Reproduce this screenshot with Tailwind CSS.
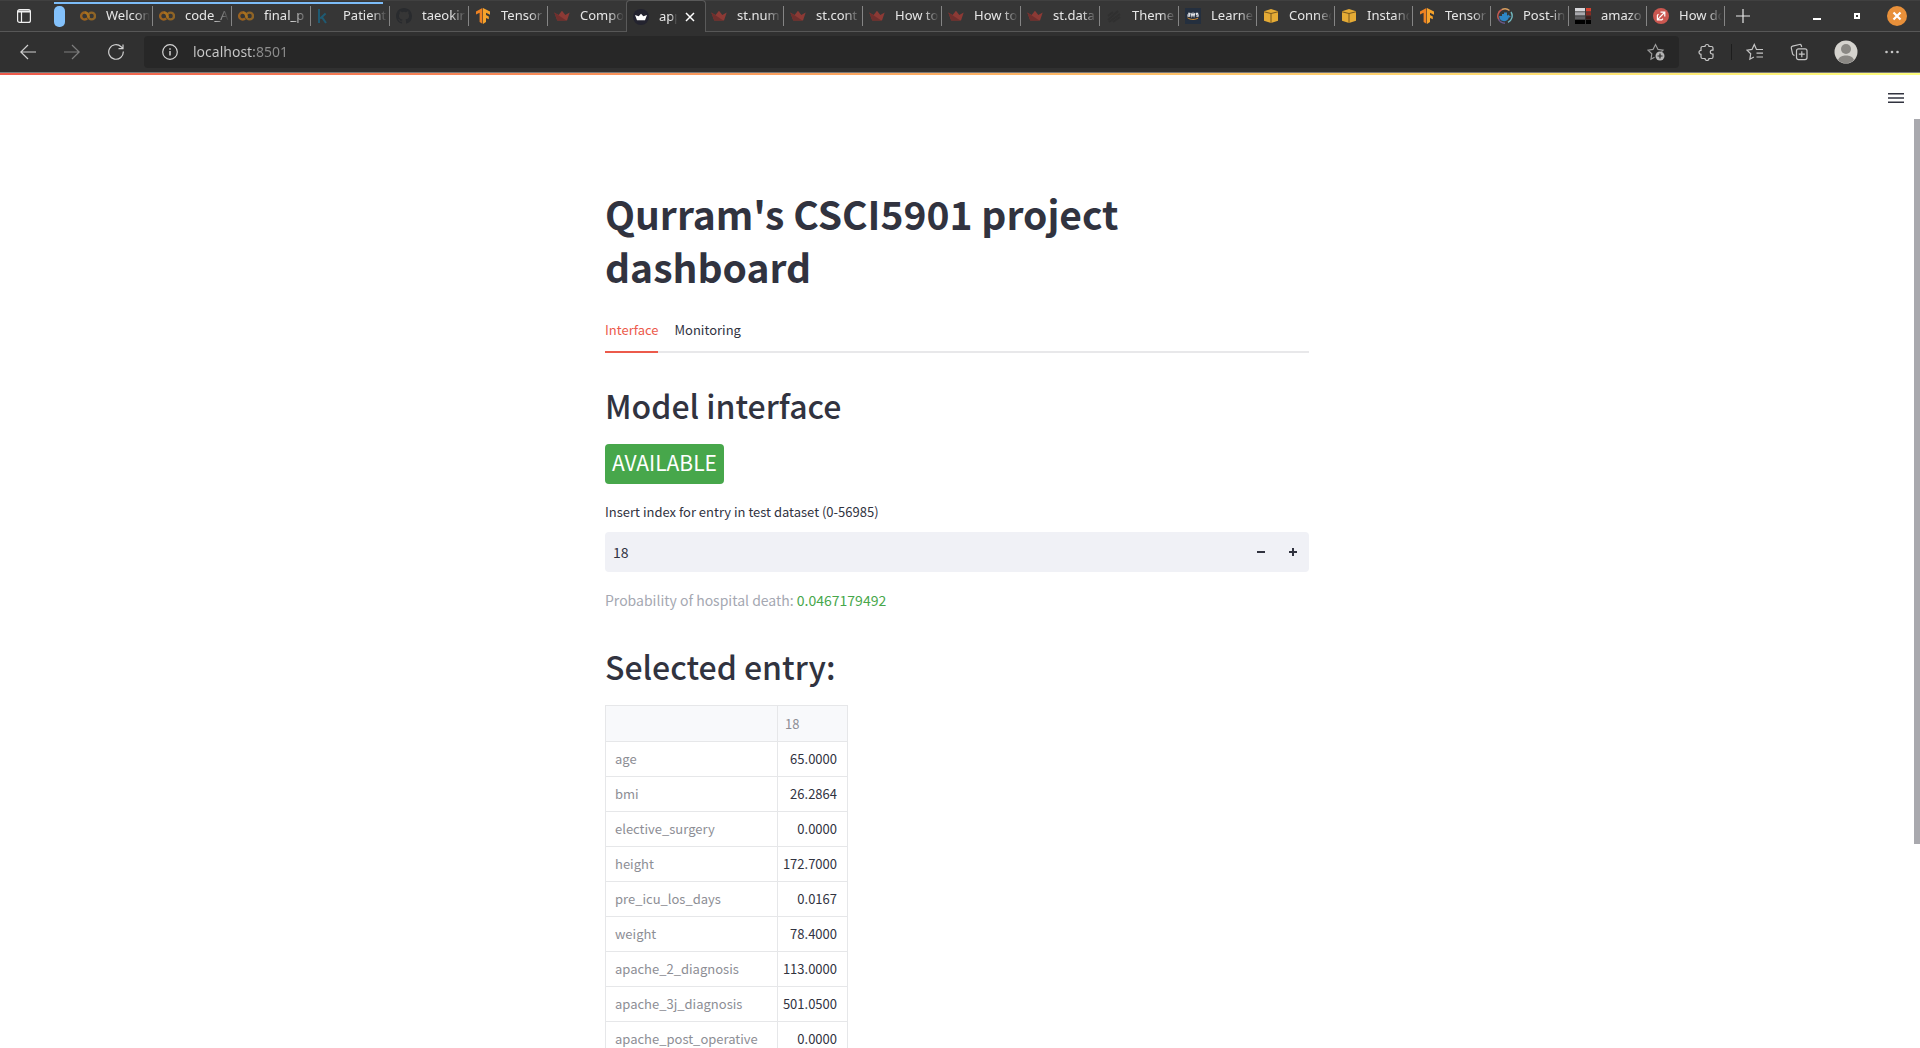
<!DOCTYPE html>
<html lang="en">
<head>
<meta charset="utf-8">
<meta name="viewport" content="width=device-width, initial-scale=1">
<title>app</title>
<script src="https://cdn.jsdelivr.net/npm/@tailwindcss/browser@4"></script>
</head>
<body class="h-screen overflow-hidden flex flex-col bg-white font-['Noto_Sans_CJK_SC','Noto_Sans',sans-serif] text-[#31333f]">

<svg class="hidden" aria-hidden="true">
  <symbol id="colab" viewBox="0 0 16 16"><g fill="none" stroke-width="2.4"><path stroke="#9a6220" d="M7.2 5.6A3.5 3.5 0 1 0 7.2 10.4"/><circle cx="11.6" cy="8" r="3.4" stroke="#8f6426"/><path stroke="#a8701f" d="M4.8 4.5a3.5 3.5 0 0 1 2.6 1.3L9 9.8"/></g></symbol>
  <symbol id="kaggle" viewBox="0 0 16 16"><path fill="none" stroke="#1f5a72" stroke-width="2" d="M2 1v14M8.6 5.4 3.2 10.4M4.6 8.6 9 15"/></symbol>
  <symbol id="github" viewBox="0 0 16 16"><path fill="#292b2e" d="M8 0C3.58 0 0 3.58 0 8c0 3.54 2.29 6.53 5.47 7.59.4.07.55-.17.55-.38v-1.49c-2.01.37-2.53-.49-2.69-.94-.09-.23-.48-.94-.82-1.13-.28-.15-.68-.52-.01-.53.63-.01 1.08.58 1.23.82.72 1.21 1.87.87 2.33.66.07-.52.28-.87.51-1.07-1.78-.2-3.64-.89-3.64-3.95 0-.87.31-1.59.82-2.15-.08-.2-.36-1.02.08-2.12 0 0 .67-.21 2.2.82a7.6 7.6 0 0 1 4 0c1.53-1.04 2.2-.82 2.2-.82.44 1.1.16 1.92.08 2.12.51.56.82 1.27.82 2.15 0 3.07-1.87 3.75-3.65 3.95.29.25.54.73.54 1.48v2.2c0 .21.15.46.55.38A8 8 0 0 0 16 8c0-4.42-3.58-8-8-8z"/></symbol>
  <symbol id="tensor" viewBox="0 0 16 16"><path fill="#ee8222" d="M7.4 0 1 3.6v3L4.6 4.8V14l2.8 1.8z"/><path fill="#f6a32b" d="m8 0 7 3.6v3.1l-4-2v2.2l2.8 1.5v2.9L11 9.9V14l-3 2z"/></symbol>
  <symbol id="crown" viewBox="0 0 16 16"><path fill="#8c3a35" d="m.3 4.6 4.3 2.3L8 2.8l3.3 4.1 4.4-2.3-2.7 7.8H3.2z"/><path fill="#6f2f2d" d="m.3 4.6 12 7.8h-9z"/></symbol>
  <symbol id="app-crown" viewBox="0 0 16 16"><circle cx="8" cy="8" r="8" fill="#23232f"/><path fill="#fff" d="m2 6 3.700 1.200L8 4.800l2.300 2.400L14 6l-2 5.200H4z"/></symbol>
  <symbol id="theme" viewBox="0 0 16 16"><path fill="none" stroke="#303030" stroke-width="2" d="M2 12 12 3M3 14 14 6M7 14l7-5M2 8l5-4"/></symbol>
  <symbol id="aws" viewBox="0 0 16 16"><path fill="#242f3e" d="M0 0h16v16H0z"/><path fill="none" stroke="#e3e5e8" stroke-width="1.1" d="M3 5.3h1.7v3H3V6.8h1.7M6 5l.9 3.2L8 5.4l1 2.8.9-3.2M13.2 5.4h-1.7v1.3h1.6v1.5h-1.8"/><path fill="none" stroke="#d9902f" d="M2.5 9.8c3.2 2.2 7.6 2.1 10.6.2"/></symbol>
  <symbol id="cube" viewBox="0 0 16 16"><path fill="#e5ab35" d="M1 3.2 8 1l7 2.2v9.6L8 15l-7-2.2z"/><path fill="none" stroke="#76571f" d="m1 3.8 7 1.7 7-1.7M8 5.5V15"/></symbol>
  <symbol id="docker" viewBox="0 0 16 16"><g fill="none" stroke-width="1.4"><path stroke="#c65a52" d="M2 12A7.2 7.2 0 0 1 5 1.5"/><path stroke="#d9a060" d="M5 1.5a7.2 7.2 0 0 1 7.5 1"/><path stroke="#72b8bf" d="M14 4a7.2 7.2 0 0 1-3 10.4"/><path stroke="#695889" d="M1.5 11A7.2 7.2 0 0 0 8 15.2"/></g><path fill="#2e86c6" d="M2.200 8H5V6h2V4.500h3V7.300q1 .5 1.600-.8.9.6.8 1.500 1 0 1.600.4-.8 1-2.200 1c-1.300 5.400-9.600 5-9.600-1.400z"/></symbol>
  <symbol id="stack" viewBox="0 0 16 16"><path fill="#d6d6da" d="M0 0h10v3.400H0z"/><path fill="#d2402f" d="M11 0h5v3.400h-5z"/><path fill="#a9a9ae" d="M0 4.200h10v3.200H0z"/><path fill="#862b23" d="M11 4.200h5v3.200h-5z"/><path fill="#5f5f62" d="M0 8.300h10v3H0z"/><path fill="#3a1d1a" d="M11 8.300h5v3h-5z"/><path d="M0 12h10v4H0zM11 12h5v4h-5z"/></symbol>
  <symbol id="link-red" viewBox="0 0 16 16"><circle cx="8" cy="8" r="8" fill="#cb5750"/><path fill="none" stroke="#fff" stroke-width="1.200" d="M7.500 4.200h4.300v4.300M11.600 4.400 6.500 9.500M5.500 6.200l-1.100 1v4.600h4.400l1.200-1.200M4.500 11.700l2-2"/></symbol>
</svg>

<header class="shrink-0 font-['Noto_Sans',sans-serif]">
  <!-- Tab strip -->
  <div class="relative h-8 flex items-center bg-[#363636] border-t border-b border-t-[#404040] border-b-[#575757] text-[13px] text-[#e6e6e6]">
    <div class="absolute left-[54px] top-px h-0.5 w-[329px] bg-[#7cbcf8]"></div>
    <button aria-label="Tab actions" class="ml-4 w-4 shrink-0"><svg class="size-4" viewBox="0 0 16 16" fill="none" stroke="#f0f0f0" stroke-width="1.2"><rect x="1.600" y="1.600" width="12.800" height="12.800" rx="2"/><path stroke-width="2" d="M2 3.500h12"/><path d="M5.500 4v10"/></svg></button>
    <button aria-label="Tab group" class="ml-[22px] mr-[9px] h-[21px] w-[11px] shrink-0 rounded-[5px] bg-[#83c1fb]"></button>
    <nav class="flex items-center" aria-label="Tabs">
      <a href="#" class="flex items-center gap-2.5 w-[79px] h-5 pl-1.5 pr-0.5 border-r border-[#858585]"><svg class="size-4 shrink-0"><use href="#colab"/></svg><span class="flex-1 overflow-hidden whitespace-nowrap [mask-image:linear-gradient(90deg,#000_65%,transparent)]">Welcon</span></a>
      <a href="#" class="flex items-center gap-2.5 w-[79px] h-5 pl-1.5 pr-0.5 border-r border-[#858585]"><svg class="size-4 shrink-0"><use href="#colab"/></svg><span class="flex-1 overflow-hidden whitespace-nowrap [mask-image:linear-gradient(90deg,#000_65%,transparent)]">code_A</span></a>
      <a href="#" class="flex items-center gap-2.5 w-[79px] h-5 pl-1.5 pr-0.5 border-r border-[#858585]"><svg class="size-4 shrink-0"><use href="#colab"/></svg><span class="flex-1 overflow-hidden whitespace-nowrap [mask-image:linear-gradient(90deg,#000_65%,transparent)]">final_p</span></a>
      <a href="#" class="flex items-center gap-2.5 w-[79px] h-5 pl-1.5 pr-0.5 border-r border-[#858585]"><svg class="size-4 shrink-0"><use href="#kaggle"/></svg><span class="flex-1 overflow-hidden whitespace-nowrap [mask-image:linear-gradient(90deg,#000_65%,transparent)]">Patient</span></a>
      <a href="#" class="flex items-center gap-2.5 w-[79px] h-5 pl-1.5 pr-0.5 border-r border-[#858585]"><svg class="size-4 shrink-0"><use href="#github"/></svg><span class="flex-1 overflow-hidden whitespace-nowrap [mask-image:linear-gradient(90deg,#000_65%,transparent)]">taeokir</span></a>
      <a href="#" class="flex items-center gap-2.5 w-[79px] h-5 pl-1.5 pr-0.5 border-r border-[#858585]"><svg class="size-4 shrink-0"><use href="#tensor"/></svg><span class="flex-1 overflow-hidden whitespace-nowrap [mask-image:linear-gradient(90deg,#000_65%,transparent)]">Tensor</span></a>
      <a href="#" class="flex items-center gap-2.5 w-[78px] h-5 pl-1.5 pr-0.5"><svg class="size-4 shrink-0"><use href="#crown"/></svg><span class="flex-1 overflow-hidden whitespace-nowrap [mask-image:linear-gradient(90deg,#000_65%,transparent)]">Compo</span></a>
      <div class="relative z-10 flex items-center w-20 h-8 pl-1.5 pr-2.5 rounded-t border border-b-0 border-[#5a5a5a] bg-[#303030]"><a href="#" class="flex items-center gap-2.5 w-[44px] overflow-hidden"><svg class="size-4 shrink-0"><use href="#app-crown"/></svg><span class="flex-1 overflow-hidden [mask-image:linear-gradient(90deg,#000_65%,transparent)]">app</span></a><button aria-label="Close tab" class="ml-auto"><svg class="size-2.5" viewBox="0 0 10 10" stroke="#fff" stroke-width="1.500"><path d="m1 1 8 8M9 1 1 9"/></svg></button></div>
      <a href="#" class="flex items-center gap-2.5 w-[78px] h-5 pl-[5px] pr-0.5 border-r border-[#858585]"><svg class="size-4 shrink-0"><use href="#crown"/></svg><span class="flex-1 overflow-hidden whitespace-nowrap [mask-image:linear-gradient(90deg,#000_65%,transparent)]">st.num</span></a>
      <a href="#" class="flex items-center gap-2.5 w-[79px] h-5 pl-1.5 pr-0.5 border-r border-[#858585]"><svg class="size-4 shrink-0"><use href="#crown"/></svg><span class="flex-1 overflow-hidden whitespace-nowrap [mask-image:linear-gradient(90deg,#000_65%,transparent)]">st.cont</span></a>
      <a href="#" class="flex items-center gap-2.5 w-[79px] h-5 pl-1.5 pr-0.5 border-r border-[#858585]"><svg class="size-4 shrink-0"><use href="#crown"/></svg><span class="flex-1 overflow-hidden whitespace-nowrap [mask-image:linear-gradient(90deg,#000_65%,transparent)]">How to</span></a>
      <a href="#" class="flex items-center gap-2.5 w-[79px] h-5 pl-1.5 pr-0.5 border-r border-[#858585]"><svg class="size-4 shrink-0"><use href="#crown"/></svg><span class="flex-1 overflow-hidden whitespace-nowrap [mask-image:linear-gradient(90deg,#000_65%,transparent)]">How to</span></a>
      <a href="#" class="flex items-center gap-2.5 w-[79px] h-5 pl-1.5 pr-0.5 border-r border-[#858585]"><svg class="size-4 shrink-0"><use href="#crown"/></svg><span class="flex-1 overflow-hidden whitespace-nowrap [mask-image:linear-gradient(90deg,#000_65%,transparent)]">st.data</span></a>
      <a href="#" class="flex items-center gap-2.5 w-[79px] h-5 pl-1.5 pr-0.5 border-r border-[#858585]"><svg class="size-4 shrink-0"><use href="#theme"/></svg><span class="flex-1 overflow-hidden whitespace-nowrap [mask-image:linear-gradient(90deg,#000_65%,transparent)]">Theme</span></a>
      <a href="#" class="flex items-center gap-2.5 w-[78px] h-5 pl-1.5 pr-0.5 border-r border-[#858585]"><svg class="size-4 shrink-0"><use href="#aws"/></svg><span class="flex-1 overflow-hidden whitespace-nowrap [mask-image:linear-gradient(90deg,#000_65%,transparent)]">Learne</span></a>
      <a href="#" class="flex items-center gap-2.5 w-[78px] h-5 pl-1.5 pr-0.5 border-r border-[#858585]"><svg class="size-4 shrink-0"><use href="#cube"/></svg><span class="flex-1 overflow-hidden whitespace-nowrap [mask-image:linear-gradient(90deg,#000_65%,transparent)]">Connec</span></a>
      <a href="#" class="flex items-center gap-2.5 w-[78px] h-5 pl-1.5 pr-0.5 border-r border-[#858585]"><svg class="size-4 shrink-0"><use href="#cube"/></svg><span class="flex-1 overflow-hidden whitespace-nowrap [mask-image:linear-gradient(90deg,#000_65%,transparent)]">Instanc</span></a>
      <a href="#" class="flex items-center gap-2.5 w-[78px] h-5 pl-1.5 pr-0.5 border-r border-[#858585]"><svg class="size-4 shrink-0"><use href="#tensor"/></svg><span class="flex-1 overflow-hidden whitespace-nowrap [mask-image:linear-gradient(90deg,#000_65%,transparent)]">Tensor</span></a>
      <a href="#" class="flex items-center gap-2.5 w-[78px] h-5 pl-1.5 pr-0.5 border-r border-[#858585]"><svg class="size-4 shrink-0"><use href="#docker"/></svg><span class="flex-1 overflow-hidden whitespace-nowrap [mask-image:linear-gradient(90deg,#000_65%,transparent)]">Post-in</span></a>
      <a href="#" class="flex items-center gap-2.5 w-[78px] h-5 pl-1.5 pr-0.5 border-r border-[#858585]"><svg class="size-4 shrink-0"><use href="#stack"/></svg><span class="flex-1 overflow-hidden whitespace-nowrap [mask-image:linear-gradient(90deg,#000_65%,transparent)]">amazo</span></a>
      <a href="#" class="flex items-center gap-2.5 w-[78px] h-5 pl-1.5 pr-0.5 border-r border-[#858585]"><svg class="size-4 shrink-0"><use href="#link-red"/></svg><span class="flex-1 overflow-hidden whitespace-nowrap [mask-image:linear-gradient(90deg,#000_65%,transparent)]">How do</span></a>
    </nav>
    <button aria-label="New tab" class="ml-2.5"><svg class="size-4" viewBox="0 0 16 16" stroke="#e8e8e8" stroke-width="1.200"><path d="M8 1v14M1 8h14"/></svg></button>
    <div class="ml-auto flex items-center gap-5 pr-[13px]">
      <button aria-label="Minimize"><svg class="size-5" viewBox="0 0 20 20"><path fill="#fff" d="M6 12h8v2H6z"/></svg></button>
      <button aria-label="Restore"><svg class="size-5" viewBox="0 0 20 20"><path fill="none" stroke="#fff" stroke-width="2" d="M8 8h4v4H8z"/></svg></button>
      <button aria-label="Close"><svg class="size-5" viewBox="0 0 20 20"><circle cx="10" cy="10" r="10" fill="#e8903a"/><path stroke="#fff" stroke-width="2.200" d="m6.500 6.500 7 7M13.500 6.500l-7 7"/></svg></button>
    </div>
  </div>

  <!-- Navigation bar -->
  <div class="h-[41px] flex items-center px-5 bg-[#303030] border-b border-[#7a7a7a]">
    <div class="flex items-center gap-7 w-[124px] shrink-0">
      <button aria-label="Back"><svg class="size-4" viewBox="0 0 16 16" fill="none" stroke="#d0d0d0" stroke-width="1.200"><path d="M16 8H.8M8 1 .8 8 8 15"/></svg></button>
      <button aria-label="Forward"><svg class="size-4" viewBox="0 0 16 16" fill="none" stroke="#7d7d7d" stroke-width="1.200"><path d="M0 8h15.200M8 1l7.200 7L8 15"/></svg></button>
      <button aria-label="Refresh"><svg class="size-4" viewBox="0 0 16 16" fill="none" stroke="#d0d0d0" stroke-width="1.200"><path d="M15.300 7.500a7.300 7.300 0 1 1-2.200-4.800L15 4.700M15 .5v4.200h-4.500"/></svg></button>
    </div>
    <div class="flex-1 h-8 flex items-center pl-[18px] pr-3.5 rounded bg-[#272727]">
      <button aria-label="Site information"><svg class="size-4" viewBox="0 0 16 16" fill="none" stroke="#d4d4d4" stroke-width="1.200"><circle cx="8" cy="8" r="7.300"/><path stroke-width="1.500" d="M8 7v4.500M8 4.300v1.500"/></svg></button>
      <input type="text" aria-label="Address" value="localhost:8501" class="ml-[15px] flex-1 h-6 pb-0.5 text-sm text-transparent bg-clip-text bg-[linear-gradient(90deg,#c9c9c9_61px,#8d8d8d_61px)] outline-none">
      <button aria-label="Add to favorites"><svg class="size-[18px]" viewBox="0 0 18 18" fill="none" stroke="#9c9c9c" stroke-width="1.200"><path d="M7.500 14.200 4 16.200l.8-5.400L1 7.200l5-.8L8.500 1.500 11 6.400l5 .7-1.500 1.500"/><circle cx="13" cy="13" r="4.500" fill="#b5b5b5" stroke="none"/><path stroke="#272727" d="M13 10.500v5M10.500 13h5"/></svg></button>
    </div>
    <div class="flex items-center ml-[19px]">
      <button aria-label="Extensions"><svg class="size-[18px]" viewBox="0 0 18 18" fill="none" stroke="#c6c6c6" stroke-width="1.200"><path d="M4.500 3.500H7a2 2 0 0 1 4 0h2.500q1.500 0 1.500 1.500v2.200h-.8a1.900 1.900 0 0 0 0 3.800h.8V14q0 1.500-1.500 1.500H11a2 2 0 0 1-4 0H4.500Q3 15.500 3 14v-2.700a2 2 0 0 1 0-4V5q0-1.500 1.500-1.500z"/></svg></button>
      <span class="w-px h-4 ml-[15px] mr-3.5 bg-[#1d1d1d]"></span>
      <button aria-label="Favorites"><svg class="size-[18px]" viewBox="0 0 18 18" fill="none" stroke="#c6c6c6" stroke-width="1.200"><path d="M17 6.500h-6.500L8.300 1.500 6 6.400 1 7.200l3.700 3.500-.8 5.500 4-2.200M10.500 10.200H17M10.500 14H17"/></svg></button>
      <button aria-label="Collections" class="ml-[26px]"><svg class="size-[18px]" viewBox="0 0 18 18" fill="none" stroke="#c6c6c6" stroke-width="1.200"><path d="m4.500 12.500-1-.5q-.8-.4-1-1.300L1.300 5q-.3-1.500 1.200-1.900l7-1.600q1.300-.3 1.800 1l.4 1.500"/><rect x="6.500" y="5.800" width="10.500" height="10.800" rx="2"/><path d="M11.800 8.200v6M8.800 11.200h6"/></svg></button>
      <button aria-label="Profile" class="ml-[26px]"><svg class="size-6" viewBox="0 0 24 24"><circle cx="12" cy="12" r="11.500" fill="#d5d3ce"/><circle cx="12" cy="9" r="5" fill="#8a8884"/><path fill="#8a8884" d="M4 20c1.500-3.500 4.500-4.500 8-4.500s6.500 1 8 4.500a11.500 11.500 0 0 1-16 0z"/></svg></button>
      <button aria-label="Settings and more" class="ml-[26px]"><svg class="w-4 h-4" viewBox="0 0 16 16" fill="#c6c6c6"><circle cx="2.500" cy="8" r="1.300"/><circle cx="8" cy="8" r="1.300"/><circle cx="13.500" cy="8" r="1.300"/></svg></button>
    </div>
  </div>
</header>

<div class="shrink-0 h-0.5 bg-linear-to-r from-[#ee5a4b] to-[#fdfd7c]"></div>

<div class="flex-1 min-h-0 flex overflow-hidden">
  <div class="relative flex-1 overflow-hidden">
    <button aria-label="Main menu" class="absolute right-2.5 top-[15px]"><svg class="w-4 h-4" viewBox="0 0 16 16" stroke="#31333f" stroke-width="1.600"><path d="M0 3.800h16M0 8h16M0 12.200h16"/></svg></button>
    <main class="mx-auto w-full max-w-[736px] px-4 pt-28">
      <h1 class="text-[39px] leading-[53px] font-bold">Qurram's CSCI5901 project dashboard</h1>

      <div role="tablist" class="mt-[19px] flex gap-4 h-[41px] border-b-2 border-[#e8e8ea] text-[13px]">
        <button role="tab" aria-selected="true" class="-mb-0.5 pb-1 border-b-2 border-[#ec5a4b] text-[#ec5a4b]">Interface</button>
        <button role="tab" aria-selected="false" class="pb-1">Monitoring</button>
      </div>

      <h2 class="mt-[31px] text-[32px] leading-[43px] font-medium">Model interface</h2>
      <p class="mt-[17px] w-fit h-10 px-[7px] pb-0.5 flex items-center rounded bg-[#47a74b] text-[21px] text-white">AVAILABLE</p>

      <label for="entry" class="mt-[18px] block text-[13px] leading-5">Insert index for entry in test dataset (0-56985)</label>
      <div class="mt-2.5 flex h-10 rounded bg-[#f0f1f6]">
        <input id="entry" type="number" value="18" class="flex-1 pl-2 text-sm outline-none [appearance:textfield]">
        <button aria-label="Decrease" class="w-8 flex items-center justify-center"><svg class="size-2" viewBox="0 0 8 8" fill="#31333f"><path d="M0 3h8v2H0z"/></svg></button>
        <button aria-label="Increase" class="w-8 flex items-center justify-center"><svg class="size-2" viewBox="0 0 8 8" fill="#31333f"><path d="M0 3h8v2H0zM3 0h2v8H3z"/></svg></button>
      </div>

      <p class="mt-4 text-sm leading-6 text-[#a5a8b2]">Probability of hospital death: <span class="text-[#47a74b]">0.0467179492</span></p>

      <h2 class="mt-[33px] text-[32px] leading-[43px] font-medium">Selected entry:</h2>
      <table class="mt-[17px] w-[243px] table-fixed border-separate border-spacing-0 border-t border-l border-[#e6e7e9] text-[13px] leading-5 [&_td]:h-[35px] [&_td]:border-r [&_td]:border-b [&_td]:border-[#e6e7e9] [&_td]:pr-2.5 [&_td]:text-right [&_th]:border-r [&_th]:border-b [&_th]:border-[#e6e7e9] [&_th]:text-left [&_th]:font-normal [&_th]:text-[#8d8e95] [&_thead_th]:pl-[7px] [&_tbody_th]:pl-[9px]">
        <thead><tr class="h-9 bg-[#f8f9fb]"><th class="w-[172px]"></th><th scope="col">18</th></tr></thead>
        <tbody>
          <tr><th scope="row">age</th><td>65.0000</td></tr>
          <tr><th scope="row">bmi</th><td>26.2864</td></tr>
          <tr><th scope="row">elective_surgery</th><td>0.0000</td></tr>
          <tr><th scope="row">height</th><td>172.7000</td></tr>
          <tr><th scope="row">pre_icu_los_days</th><td>0.0167</td></tr>
          <tr><th scope="row">weight</th><td>78.4000</td></tr>
          <tr><th scope="row">apache_2_diagnosis</th><td>113.0000</td></tr>
          <tr><th scope="row">apache_3j_diagnosis</th><td>501.0500</td></tr>
          <tr><th scope="row">apache_post_operative</th><td>0.0000</td></tr>
        </tbody>
      </table>
    </main>
  </div>
  <!-- Scrollbar rail -->
  <div class="w-1.5 shrink-0 pt-11"><div class="h-[78%] bg-[#a9a9ae]"></div></div>
</div>
</body>
</html>
